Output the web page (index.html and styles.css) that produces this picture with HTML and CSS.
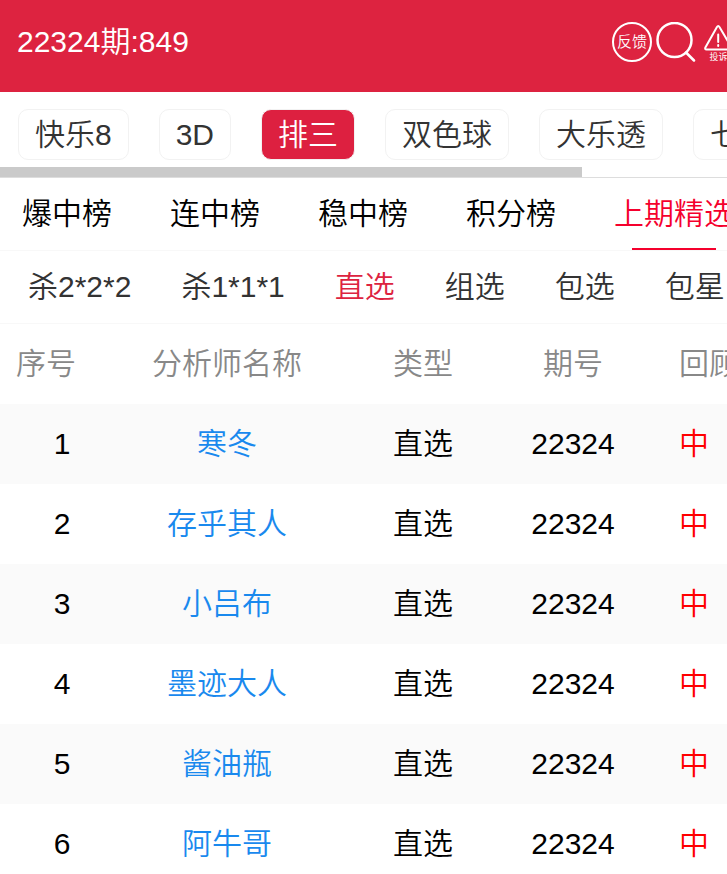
FILE: index.html
```
<!DOCTYPE html>
<html lang="zh-CN">
<head>
<meta charset="utf-8">
<meta name="viewport" content="width=device-width, initial-scale=1">
<title>排三 上期精选</title>
<link rel="stylesheet" href="styles.css">
</head>
<body>
<header class="header">
	<h1>22324期:849</h1>
	<div class="tools">
		<button type="button" class="feedback">反馈</button>
		<button type="button" class="search" aria-label="搜索">
			<svg width="40" height="40" viewBox="0 0 40 40">
				<circle cx="18.5" cy="18" r="17"/>
				<path d="M30 30.5L38 38.5"/>
			</svg>
		</button>
		<button type="button" class="complain">
			<svg width="29" height="27" viewBox="0 0 29 27">
				<path d="M12.8 2.2Q14.2 0 15.6 2.2L27.6 22.5Q28.4 24.4 26.5 24.4H2.5Q.6 24.4 1.4 22.5Z"/>
				<path d="M14.2 9.5V17M14.2 20V21"/>
			</svg>
			<span>投诉</span>
		</button>
	</div>
</header>

<nav class="lottery">
	<a href="#">快乐8</a>
	<a href="#">3D</a>
	<a href="#" class="on">排三</a>
	<a href="#">双色球</a>
	<a href="#">大乐透</a>
	<a href="#">七星彩</a>
</nav>
<div class="scrollbar"><div class="thumb"></div></div>

<nav class="rank">
	<a href="#">爆中榜</a>
	<a href="#">连中榜</a>
	<a href="#">稳中榜</a>
	<a href="#">积分榜</a>
	<a href="#" class="on">上期精选</a>
</nav>

<nav class="kind">
	<a href="#">杀2*2*2</a>
	<a href="#">杀1*1*1</a>
	<a href="#" class="on">直选</a>
	<a href="#">组选</a>
	<a href="#">包选</a>
	<a href="#">包星</a>
</nav>

<div class="list">
<table>
	<colgroup>
		<col class="c-num">
		<col class="c-name">
		<col class="c-type">
		<col class="c-issue">
		<col class="c-hit">
	</colgroup>
	<thead>
	<tr>
		<th class="num">序号</th>
		<th>分析师名称</th>
		<th>类型</th>
		<th>期号</th>
		<th class="hit">回顾</th>
	</tr>
	</thead>
	<tbody>
	<tr>
		<td>1</td>
		<td><a href="#">寒冬</a></td>
		<td>直选</td>
		<td>22324</td>
		<td class="hit">中</td>
	</tr>
	<tr>
		<td>2</td>
		<td><a href="#">存乎其人</a></td>
		<td>直选</td>
		<td>22324</td>
		<td class="hit">中</td>
	</tr>
	<tr>
		<td>3</td>
		<td><a href="#">小吕布</a></td>
		<td>直选</td>
		<td>22324</td>
		<td class="hit">中</td>
	</tr>
	<tr>
		<td>4</td>
		<td><a href="#">墨迹大人</a></td>
		<td>直选</td>
		<td>22324</td>
		<td class="hit">中</td>
	</tr>
	<tr>
		<td>5</td>
		<td><a href="#">酱油瓶</a></td>
		<td>直选</td>
		<td>22324</td>
		<td class="hit">中</td>
	</tr>
	<tr>
		<td>6</td>
		<td><a href="#">阿牛哥</a></td>
		<td>直选</td>
		<td>22324</td>
		<td class="hit">中</td>
	</tr>
	</tbody>
</table>
</div>
</body>
</html>
```

FILE: styles.css
```
*{
	box-sizing:border-box;
}
body{
	margin:0;
	background:#fff;
	color:#000;
	font-family:"Liberation Sans","Noto Sans CJK SC",sans-serif;
	font-size:30px;
	font-weight:350;
	line-height:48px;
	overflow-x:hidden;
}
a{
	color:inherit;
	text-decoration:none;
}

/* top bar */
.header{
	display:flex;
	align-items:center;
	justify-content:space-between;
	padding:18px 0 26px 17px;
	background:#dd2340;
	color:#fff;
	overflow:hidden;
}
.header h1{
	margin:0;
	font-size:30px;
	font-weight:inherit;
}
.tools{
	display:flex;
	gap:4px;
	margin-right:-10px;
}
.tools button{
	padding:0;
	border:0;
	background:none;
	color:#fff;
	font-family:inherit;
}
.tools svg{
	display:block;
	fill:none;
	stroke:#fff;
	stroke-width:2;
	stroke-linecap:round;
}
.tools .search svg{
	stroke-width:2.5;
}
.tools .feedback{
	width:40px;
	height:40px;
	border:2px solid #fff;
	border-radius:50%;
	font-size:15px;
	font-weight:inherit;
	line-height:36px;
}
.tools .complain{
	display:flex;
	flex-direction:column;
	align-items:center;
	width:37px;
	padding-top:3px;
	font-size:9px;
	line-height:11px;
}

/* scrolling rows */
.lottery,.rank,.kind{
	display:flex;
	overflow:hidden;
	white-space:nowrap;
}
.lottery a,.rank a,.kind a{
	flex:none;
}
.lottery{
	gap:30px;
	padding:17px 18px 7px;
	color:#333;
}
.lottery a{
	padding:0 16px;
	border:1px solid #f2f2f2;
	border-radius:10px;
	line-height:49px;
}
.lottery .on{
	background:#dd2040;
	color:#fff;
}
.scrollbar{
	border-bottom:1px solid #ddd;
}
.thumb{
	width:80%;
	height:10px;
	background:#cacaca;
}
.rank{
	gap:58px;
	padding:0 22px;
	border-bottom:1px solid #f8f8f8;
	line-height:72px;
}
.rank .on{
	position:relative;
	color:#f5002d;
}
.rank .on::after{
	content:"";
	position:absolute;
	left:15%;
	right:15%;
	bottom:0;
	height:2px;
	background:#f5002d;
}
.kind{
	gap:50px;
	padding:0 28px;
	border-bottom:1px solid #f8f8f8;
	color:#333;
	line-height:72px;
}
.kind .on{
	color:#dd2340;
}

/* analyst list */
.list{
	overflow:hidden;
}
table{
	width:758px;
	table-layout:fixed;
	border-collapse:collapse;
}
.c-num{
	width:124px;
}
.c-name{
	width:206px;
}
.c-type{
	width:186px;
}
.c-issue{
	width:114px;
}
th,td{
	height:80px;
	padding:0;
	text-align:center;
	white-space:nowrap;
}
th{
	color:#888;
	font-weight:inherit;
}
th.num{
	padding-left:16px;
	text-align:left;
}
th.hit,td.hit{
	padding-left:49px;
	text-align:left;
}
td a{
	color:#1989ee;
}
td.hit{
	color:#f00;
}
tbody tr:nth-child(odd){
	background:#fafafa;
}
```
